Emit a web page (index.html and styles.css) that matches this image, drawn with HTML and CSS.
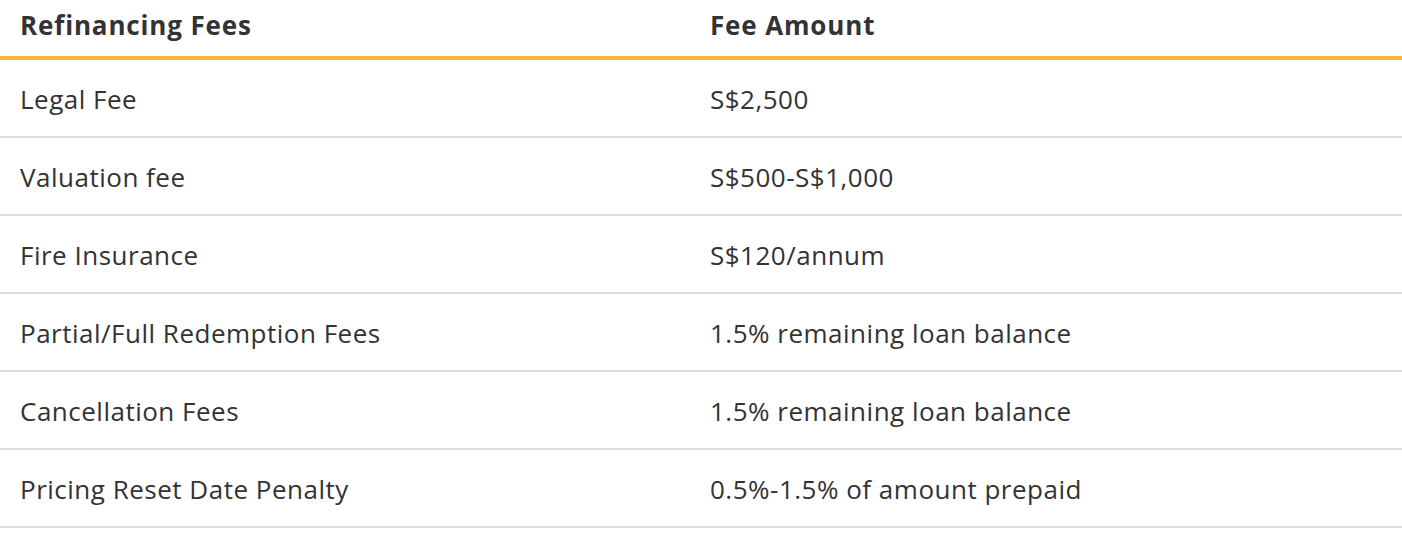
FILE: index.html
```html
<!DOCTYPE html>
<html>
<head>
<meta charset="utf-8">
<link rel="stylesheet" href="styles.css">
</head>
<body>
<table class="fees">
  <thead>
    <tr><th>Refinancing Fees</th><th>Fee Amount</th></tr>
  </thead>
  <tbody>
    <tr><td>Legal Fee</td><td>S$2,500</td></tr>
    <tr><td>Valuation fee</td><td>S$500-S$1,000</td></tr>
    <tr><td>Fire Insurance</td><td>S$120/annum</td></tr>
    <tr><td>Partial/Full Redemption Fees</td><td>1.5% remaining loan balance</td></tr>
    <tr><td>Cancellation Fees</td><td>1.5% remaining loan balance</td></tr>
    <tr><td>Pricing Reset Date Penalty</td><td>0.5%-1.5% of amount prepaid</td></tr>
  </tbody>
</table>
</body>
</html>
```
FILE: styles.css
```css
html, body { margin: 0; padding: 0; background: #fff; }
body { font-family: "Open Sans", "Liberation Sans", sans-serif; color: #333; }
.fees { width: 100%; border-collapse: collapse; table-layout: fixed; }
.fees th, .fees td { text-align: left; padding: 0 0 0 20px; }
.fees th:first-child, .fees td:first-child { width: 690px; }
.fees th { height: 58px; font-size: 26px; font-weight: 700; letter-spacing: 0.85px; border-bottom: 4px solid #f5b740; padding-bottom: 6px; box-sizing: border-box; }
.fees td { height: 74px; font-size: 26px; font-weight: 400; letter-spacing: 0.5px; border-bottom: 2px solid #d9dbde; padding-top: 2px; }
```
